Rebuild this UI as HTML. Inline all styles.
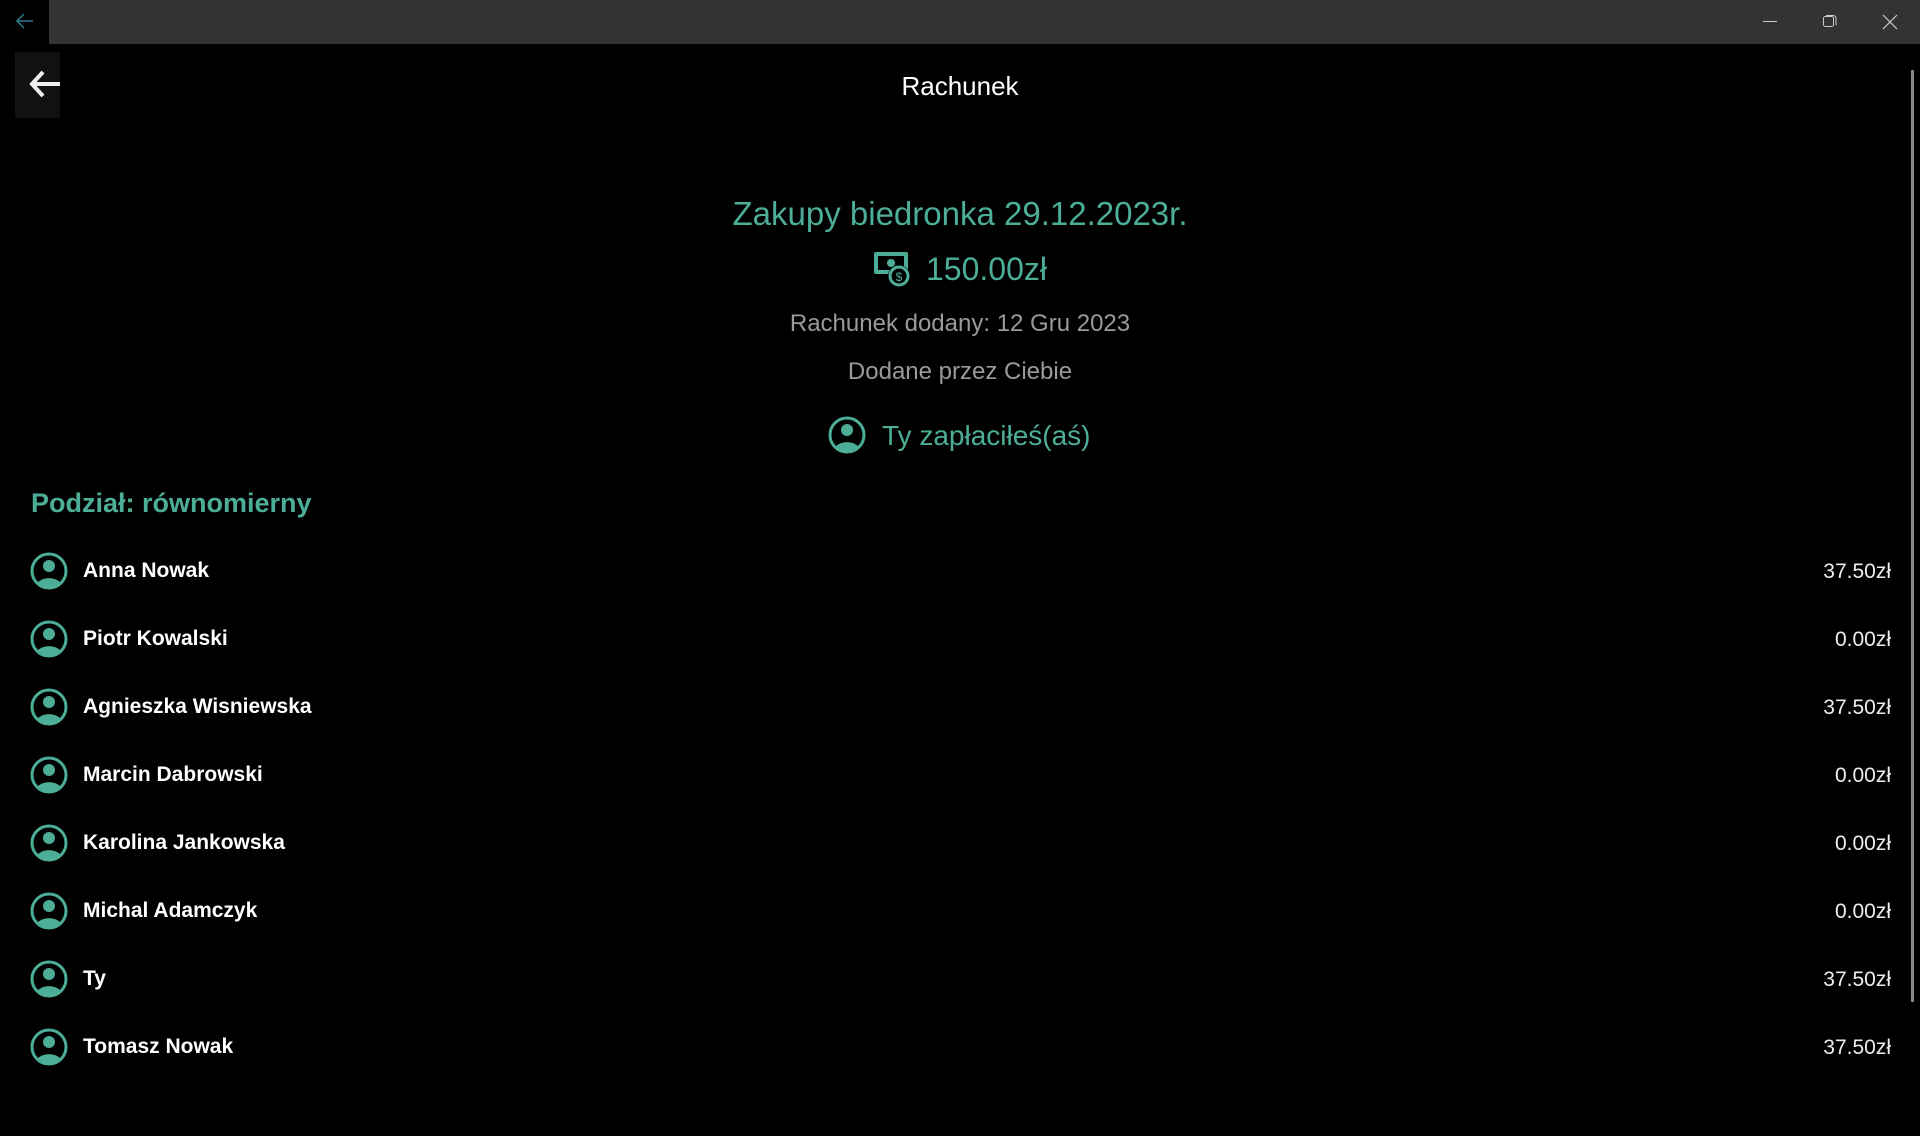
<!DOCTYPE html>
<html><head><meta charset="utf-8"><style>
body{margin:0;width:1920px;height:1136px;background:#000;overflow:hidden;font-family:"Liberation Sans","DejaVu Sans",sans-serif;position:relative}
.abs{position:absolute}
.tb{left:49px;top:0;width:1871px;height:44px;background:#333}
.c{left:0;width:1920px;text-align:center;white-space:nowrap}
.g{color:#4dae98}
.row{position:absolute;left:0;width:1920px;height:40px}
.row svg{position:absolute;left:30px;top:0}
.row .n{position:absolute;left:83px;top:7px;font-size:21px;font-weight:bold;color:#fff}
.row .a{position:absolute;right:29px;top:8px;font-size:21px;color:#eee}
</style></head><body>
<svg class="abs" style="left:14px;top:10px" width="22" height="22" viewBox="0 0 22 22"><path d="M19 11H3M10 4L3 11L10 18" stroke="#2a7a8a" stroke-width="1.5" fill="none"/></svg>
<div class="abs tb"></div>
<div class="abs" style="left:1763px;top:21px;width:14px;height:1px;background:#ccc"></div>
<svg class="abs" style="left:1822px;top:13px" width="16" height="16" viewBox="0 0 16 16"><rect x="1.5" y="3.5" width="10" height="10" rx="2" stroke="#ccc" fill="none"/><path d="M4 2.5h7a3 3 0 0 1 3 3v7" stroke="#ccc" fill="none"/></svg>
<svg class="abs" style="left:1882px;top:14px" width="16" height="16" viewBox="0 0 16 16"><path d="M1 1L15 15M15 1L1 15" stroke="#ccc" stroke-width="1.2"/></svg>
<div class="abs" style="left:15px;top:52px;width:45px;height:66px;background:#111"></div>
<svg class="abs" style="left:27px;top:68px" width="33" height="32" viewBox="0 0 33 32"><path d="M33 16H6M16 4L5 16L16 28" stroke="#eee" stroke-width="4" fill="none"/></svg>
<div class="abs c" style="top:71px;font-size:26px;color:#fff">Rachunek</div>
<div class="abs c g" style="top:195px;font-size:33px">Zakupy biedronka 29.12.2023r.</div>
<svg class="abs" style="left:872px;top:250px" width="40" height="38" viewBox="0 0 40 38"><rect x="2" y="2" width="34" height="22" rx="2" fill="#4dae98"/><rect x="6" y="6" width="26" height="14" fill="#000"/><circle cx="19" cy="13" r="4" fill="#4dae98"/><circle cx="27" cy="26" r="11" fill="#000"/><circle cx="27" cy="26" r="9" fill="none" stroke="#4dae98" stroke-width="3"/><text x="27" y="31" font-size="12" text-anchor="middle" fill="#4dae98" font-family="Liberation Sans">$</text></svg>
<div class="abs g" style="left:926px;top:251px;font-size:32px">150.00zł</div>
<div class="abs c" style="top:310px;font-size:24px;color:#9a9a9a">Rachunek dodany: 12 Gru 2023</div>
<div class="abs c" style="top:358px;font-size:24px;color:#9a9a9a">Dodane przez Ciebie</div>
<svg class="abs" style="left:828px;top:416px" width="38" height="38" viewBox="0 0 38 38"><circle cx="19" cy="19" r="17" fill="none" stroke="#4dae98" stroke-width="3"/><circle cx="19" cy="14" r="6" fill="#4dae98"/><path d="M7 31a14 10 0 0 1 24 0a17 17 0 0 1-24 0z" fill="#4dae98"/></svg>
<div class="abs g" style="left:882px;top:420px;font-size:28px">Ty zapłaciłeś(aś)</div>
<div class="abs g" style="left:31px;top:488px;font-size:27px;font-weight:bold">Podział: równomierny</div>
<div class="abs" style="left:1911px;top:70px;width:3px;height:932px;background:#888"></div>

<svg width="0" height="0" style="position:absolute"><defs><g id="u"><circle cx="19" cy="19" r="17" fill="none" stroke="#4dae98" stroke-width="3"/><circle cx="19" cy="14" r="6" fill="#4dae98"/><path d="M7 31a14 10 0 0 1 24 0a17 17 0 0 1-24 0z" fill="#4dae98"/></g></defs></svg>

<div class="row" style="top:552px"><svg width="38" height="38"><use href="#u"/></svg><span class="n">Anna Nowak</span><span class="a">37.50zł</span></div>
<div class="row" style="top:620px"><svg width="38" height="38"><use href="#u"/></svg><span class="n">Piotr Kowalski</span><span class="a">0.00zł</span></div>
<div class="row" style="top:688px"><svg width="38" height="38"><use href="#u"/></svg><span class="n">Agnieszka Wisniewska</span><span class="a">37.50zł</span></div>
<div class="row" style="top:756px"><svg width="38" height="38"><use href="#u"/></svg><span class="n">Marcin Dabrowski</span><span class="a">0.00zł</span></div>
<div class="row" style="top:824px"><svg width="38" height="38"><use href="#u"/></svg><span class="n">Karolina Jankowska</span><span class="a">0.00zł</span></div>
<div class="row" style="top:892px"><svg width="38" height="38"><use href="#u"/></svg><span class="n">Michal Adamczyk</span><span class="a">0.00zł</span></div>
<div class="row" style="top:960px"><svg width="38" height="38"><use href="#u"/></svg><span class="n">Ty</span><span class="a">37.50zł</span></div>
<div class="row" style="top:1028px"><svg width="38" height="38"><use href="#u"/></svg><span class="n">Tomasz Nowak</span><span class="a">37.50zł</span></div>
</body></html>
